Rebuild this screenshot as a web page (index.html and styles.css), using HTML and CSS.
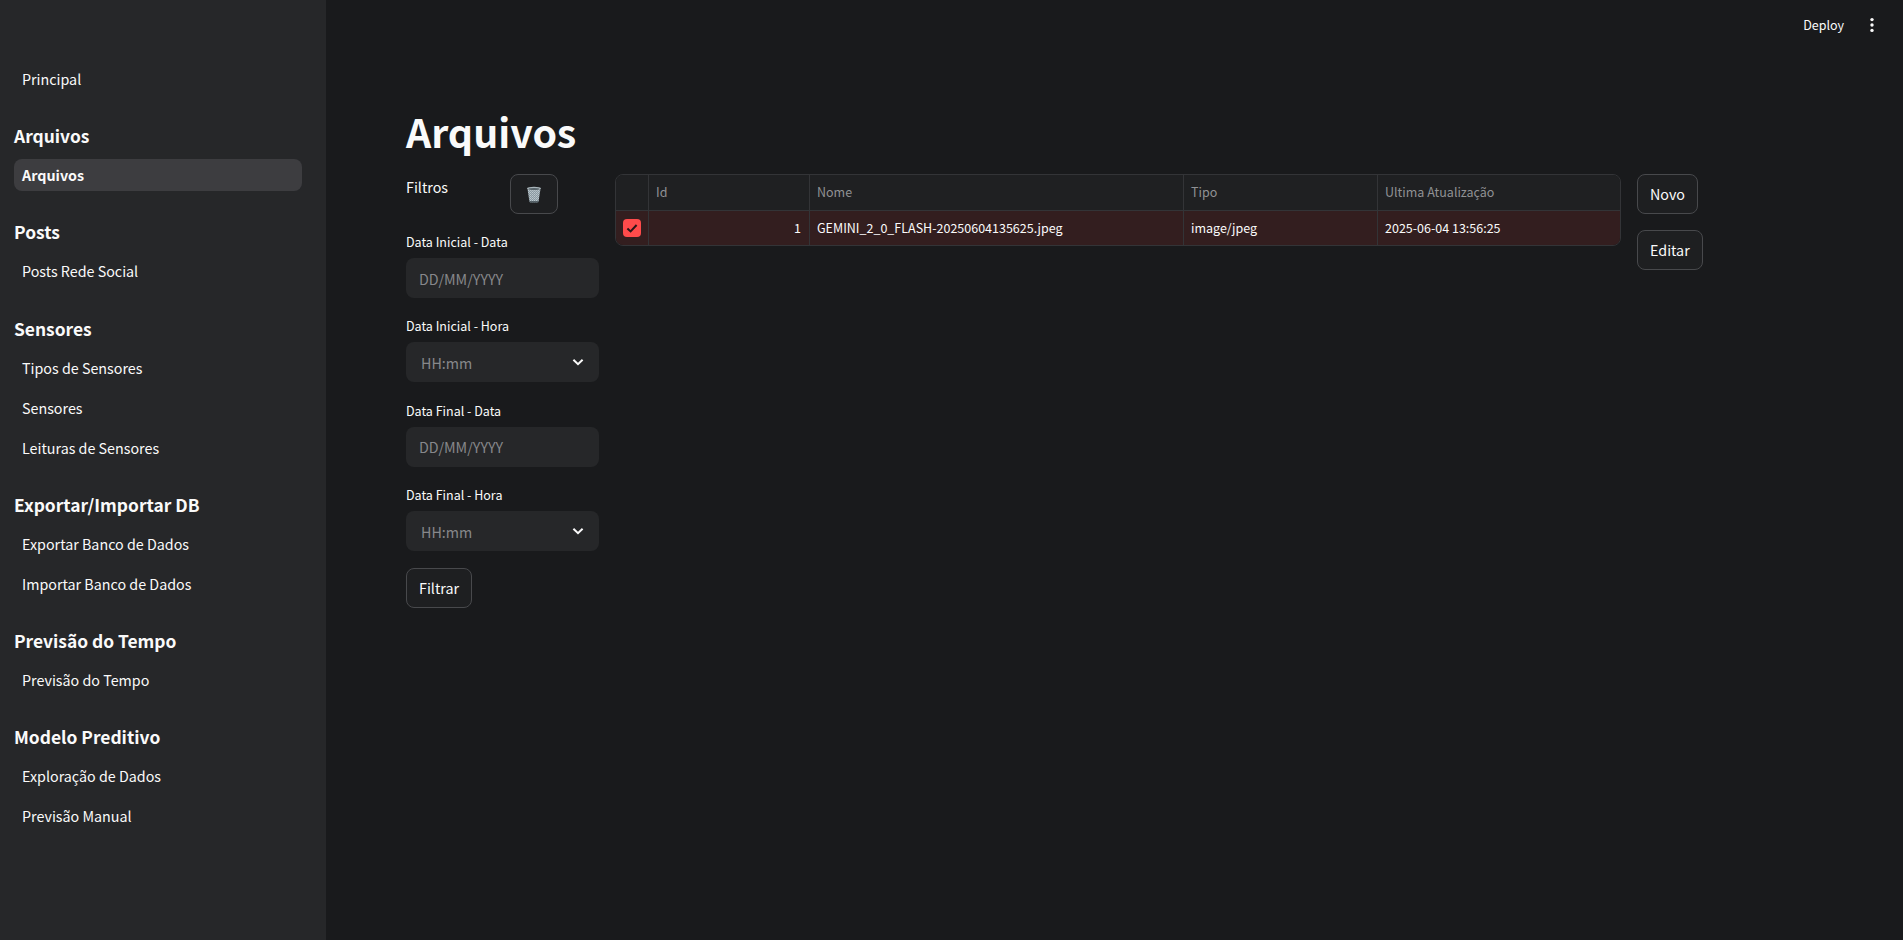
FILE: index.html
```html
<!DOCTYPE html>
<html lang="en">
<head>
    <meta charset="UTF-8">
    <meta name="viewport" content="width=device-width, initial-scale=1.0">
    <title>Arquivos</title>

    <link rel="stylesheet" href="styles.css">
</head>
<body>

    <aside class="sidebar">
        <nav class="nav">
            <a class="nav-link">Principal</a>

            <h3 class="nav-title">Arquivos</h3>
            <a class="nav-link active">Arquivos</a>

            <h3 class="nav-title">Posts</h3>
            <a class="nav-link">Posts Rede Social</a>

            <h3 class="nav-title">Sensores</h3>
            <a class="nav-link">Tipos de Sensores</a>
            <a class="nav-link">Sensores</a>
            <a class="nav-link">Leituras de Sensores</a>

            <h3 class="nav-title">Exportar/Importar DB</h3>
            <a class="nav-link">Exportar Banco de Dados</a>
            <a class="nav-link">Importar Banco de Dados</a>

            <h3 class="nav-title">Previsão do Tempo</h3>
            <a class="nav-link">Previsão do Tempo</a>

            <h3 class="nav-title">Modelo Preditivo</h3>
            <a class="nav-link">Exploração de Dados</a>
            <a class="nav-link">Previsão Manual</a>
        </nav>
    </aside>

    <main class="main">
        <header class="topbar">
            <span class="deploy">Deploy</span>
            <svg class="dots" width="16" height="16" viewBox="0 0 16 16">
                <circle cx="8" cy="2.6" r="1.7"/>
                <circle cx="8" cy="8" r="1.7"/>
                <circle cx="8" cy="13.4" r="1.7"/>
            </svg>
        </header>

        <h1 class="page-title">Arquivos</h1>

        <div class="content">
            <section class="filters">
                <div class="filters-head">
                    <span class="filters-title">Filtros</span>
                    <button class="btn btn-icon" type="button">
                        <svg width="16" height="17" viewBox="0 0 16 17">
                            <defs>
                                <pattern id="mesh" width="2" height="2" patternUnits="userSpaceOnUse">
                                    <rect width="2" height="2" fill="#8a98a0"/>
                                    <rect width="1" height="1" fill="#bcc8ce"/>
                                    <rect x="1" y="1" width="1" height="1" fill="#adbac1"/>
                                </pattern>
                            </defs>
                            <path d="M1.6 3.4 L3.4 15.2 Q3.6 16.4 5 16.4 L11 16.4 Q12.4 16.4 12.6 15.2 L14.4 3.4 Z" fill="url(#mesh)"/>
                            <path d="M3.4 15.2 Q3.6 16.4 5 16.4 L11 16.4 Q12.4 16.4 12.6 15.2 Z" fill="#3f4a50"/>
                            <ellipse cx="8" cy="2.6" rx="7" ry="1.9" fill="#aab6bc"/>
                            <ellipse cx="8" cy="3" rx="5.4" ry="1.1" fill="#59656b"/>
                        </svg>
                    </button>
                </div>

                <label class="field-label">Data Inicial - Data</label>
                <input class="field" type="text" placeholder="DD/MM/YYYY">

                <label class="field-label">Data Inicial - Hora</label>
                <div class="field field-select">
                    <span>HH:mm</span>
                    <svg width="16" height="16" viewBox="0 0 16 16"><path d="M3.4 5.8 L8 10.2 L12.6 5.8" fill="none" stroke="#fafafa" stroke-width="2"/></svg>
                </div>

                <label class="field-label">Data Final - Data</label>
                <input class="field" type="text" placeholder="DD/MM/YYYY">

                <label class="field-label">Data Final - Hora</label>
                <div class="field field-select">
                    <span>HH:mm</span>
                    <svg width="16" height="16" viewBox="0 0 16 16"><path d="M3.4 5.8 L8 10.2 L12.6 5.8" fill="none" stroke="#fafafa" stroke-width="2"/></svg>
                </div>

                <button class="btn btn-filter" type="button">Filtrar</button>
            </section>

            <div class="grid">
                <div class="grid-row grid-head">
                    <div class="cell"></div>
                    <div class="cell">Id</div>
                    <div class="cell">Nome</div>
                    <div class="cell">Tipo</div>
                    <div class="cell">Ultima Atualização</div>
                </div>
                <div class="grid-row grid-selected">
                    <div class="cell cell-check">
                        <svg width="18" height="18" viewBox="0 0 18 18">
                            <rect width="18" height="18" rx="4" fill="#ff4b4b"/>
                            <path d="M4.4 9.4 L7.6 12.4 L13.6 6" fill="none" stroke="#2a1618" stroke-width="2"/>
                        </svg>
                    </div>
                    <div class="cell cell-num">1</div>
                    <div class="cell">GEMINI_2_0_FLASH-20250604135625.jpeg</div>
                    <div class="cell">image/jpeg</div>
                    <div class="cell">2025-06-04 13:56:25</div>
                </div>
            </div>

            <div class="actions">
                <button class="btn" type="button">Novo</button>
                <button class="btn" type="button">Editar</button>
            </div>
        </div>
    </main>

</body>
</html>
```

FILE: styles.css
```css
* {
    box-sizing: border-box;
}

body {
    margin: 0;
    height: 940px;
    overflow: hidden;
    display: flex;
    background-color: #191a1c;
    color: #fafafa;
    font-family: "Noto Sans CJK SC", "Noto Sans", sans-serif;
    font-size: 14.3px;
}

.sidebar {
    width: 326px;
    flex-shrink: 0;
    background-color: #262729;
    padding: 63px 24px 0 14px;
}

.nav {
    display: flex;
    flex-direction: column;
    gap: 8px;
}

.nav-link {
    display: block;
    height: 32px;
    line-height: 32px;
    padding-left: 8px;
    border-radius: 8px;
    font-size: 14.3px;
}

.nav-link.active {
    background-color: #3d3d40;
    font-weight: 600;
}

.nav-title {
    margin: 17.2px 0 0;
    height: 31px;
    line-height: 31px;
    font-size: 17.4px;
    font-weight: 600;
}

.main {
    flex: 1;
    padding: 0 0 0 80px;
}

.topbar {
    height: 50px;
    display: flex;
    justify-content: flex-end;
    align-items: center;
    gap: 20px;
    padding-right: 23px;
}

.deploy {
    font-size: 12.5px;
    padding-bottom: 2px;
}

.dots {
    fill: #fafafa;
}

.page-title {
    margin: 51.5px 0 0;
    height: 72.5px;
    line-height: 58px;
    font-size: 39.3px;
    font-weight: 700;
}

.content {
    display: flex;
    align-items: flex-start;
    gap: 16px;
}

.filters {
    width: 193px;
    display: flex;
    flex-direction: column;
}

.filters-head {
    display: flex;
    justify-content: space-between;
    width: 152px;
    height: 40px;
    margin-bottom: 16px;
}

.filters-title {
    line-height: 26px;
}

.field-label {
    height: 24px;
    line-height: 24px;
    font-size: 12.5px;
    margin-bottom: 4px;
}

.field {
    width: 100%;
    height: 40px;
    margin-bottom: 16.4px;
    padding: 0 13px;
    border: none;
    border-radius: 8px;
    outline: none;
    background-color: #262729;
    color: #fafafa;
    font-family: inherit;
    font-size: 14.3px;
}

.field::placeholder {
    color: #87888b;
}

.field-select {
    display: flex;
    justify-content: space-between;
    align-items: center;
    padding: 0 13px 0 15px;
    color: #87888b;
}

.btn {
    height: 40px;
    padding: 0 12px;
    border: 1px solid #48494c;
    border-radius: 8px;
    background-color: #1e1f21;
    color: #fafafa;
    font-family: inherit;
    font-size: 14.3px;
}

.btn-icon {
    width: 48px;
    padding: 0;
    display: flex;
    justify-content: center;
    align-items: center;
}

.btn-filter {
    align-self: flex-start;
}

.grid {
    width: 1006px;
    border: 1px solid #333437;
    border-radius: 8px;
    overflow: hidden;
    font-size: 12.5px;
}

.grid-row {
    display: grid;
    grid-template-columns: 32px 161px 374px 194px 1fr;
    height: 35px;
}

.grid-row + .grid-row {
    border-top: 1px solid #333437;
}

.grid-head {
    background-color: #1f2022;
    color: #909194;
}

.grid-selected {
    background-color: #331e1f;
}

.cell {
    padding: 0 8px 0 7px;
    line-height: 34px;
    border-left: 1px solid #333437;
    white-space: nowrap;
    overflow: hidden;
}

.cell:first-child {
    border-left: none;
}

.cell-check {
    padding: 0;
    display: flex;
    justify-content: center;
    align-items: center;
}

.cell-num {
    text-align: right;
}

.actions {
    display: flex;
    flex-direction: column;
    align-items: flex-start;
    gap: 16px;
}

.actions .btn {
    padding-bottom: 2px;
}
```
